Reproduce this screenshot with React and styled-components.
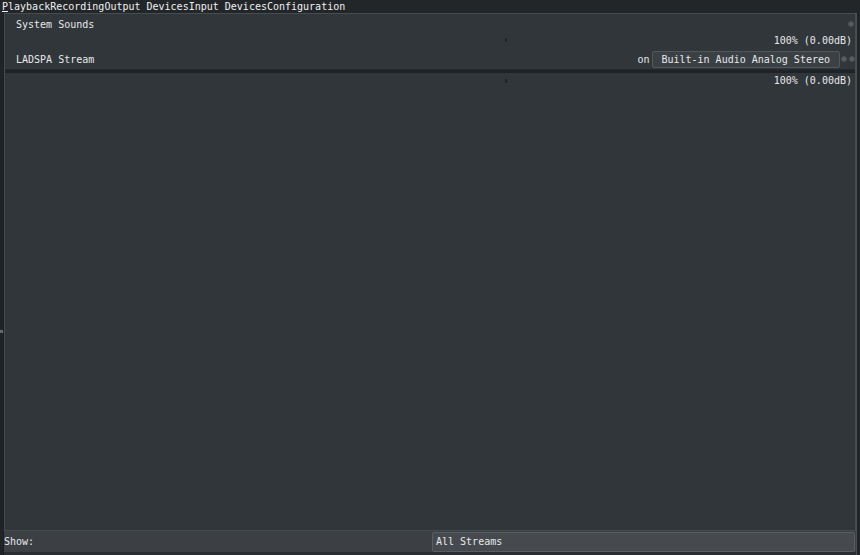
import React from "react";
import styled, { createGlobalStyle } from "styled-components";

const Global = createGlobalStyle`
  html, body { margin: 0; padding: 0; background: #232629; }
  body { font-family: "DejaVu Sans Mono", "Liberation Mono", monospace; font-size: 10px; color: #e6e8ea; }
  * { box-sizing: border-box; }
`;

const Window = styled.div`
  width: 860px;
  height: 555px;
  display: flex;
  flex-direction: column;
  background: #232629;
  overflow: hidden;
`;

const TabBar = styled.div`
  height: 13px;
  display: flex;
  align-items: center;
  padding-left: 2px;
  line-height: 13px;
  white-space: nowrap;
`;

const Tab = styled.span`
  color: #eef0f1;
  u { text-decoration: underline; text-underline-offset: 1px; }
`;

const Middle = styled.div`
  flex: 1;
  display: flex;
  min-height: 0;
`;

const Strip = styled.div`
  width: ${(p) => p.$w}px;
  background: #212427;
  border-${(p) => p.$side}: 1px solid ${(p) => p.$line};
  padding-top: ${(p) => p.$pt || 0}px;
  font-size: 5px;
  line-height: 8px;
  color: #e6e8ea;
`;

const Column = styled.div`
  flex: 1;
  display: flex;
  flex-direction: column;
  min-width: 0;
`;

const Panel = styled.div`
  flex: 1;
  background: #31363b;
  border: 1px solid #474c51;
  border-bottom: none;
  padding-top: 2px;
  display: flex;
  flex-direction: column;
`;

const Line = styled.div`
  height: ${(p) => p.$h}px;
  display: flex;
  align-items: center;
  padding: 0 0 0 11px;
  margin-top: ${(p) => p.$mt || 0}px;
  white-space: nowrap;
`;

const Name = styled.span`
  flex: 1;
`;

const Track = styled.div`
  flex: 1;
  position: relative;
  height: 100%;
`;

const Handle = styled.span`
  position: absolute;
  left: 489px;
  top: 50%;
  width: 2px;
  height: 4px;
  margin-top: -2px;
  background: #1f2225;
  border-radius: 1px;
`;

const Value = styled.span`
  padding-right: 3px;
`;

const Dot = styled.span`
  width: 6px;
  height: 6px;
  border-radius: 50%;
  background: #595e63;
  border: 1px solid #4b5055;
  margin-left: ${(p) => p.$ml ?? 2}px;
  margin-right: ${(p) => p.$mr ?? 0}px;
  flex-shrink: 0;
`;

const OnLabel = styled.span`
  margin-right: 3px;
`;

const DeviceButton = styled.div`
  height: 17px;
  display: flex;
  align-items: center;
  padding: 0 9px 0 8px;
  background: #3b4045;
  border: 1px solid #52575c;
  border-radius: 2px;
`;

const Separator = styled.div`
  height: 4px;
  margin-top: 1px;
  background: #1f2226;
  border-top: 1px solid #262a2e;
`;

const BottomBar = styled.div`
  height: 25px;
  display: grid;
  grid-template-columns: 1fr 1fr;
  align-items: center;
  background: #3c4045;
  border-top: 1px solid #464a4f;
  border-bottom: 3px solid #2a2d31;
`;

const ShowLabel = styled.span`
  padding-left: 0;
`;

const Combo = styled.div`
  height: 20px;
  display: flex;
  align-items: center;
  padding-left: 3px;
  margin: 0 1px 0 2px;
  background: #464a4f;
  border: 1px solid #5a5e63;
  border-radius: 2px;
`;

export default function App() {
  return (
    <>
      <Global />
      <Window>
        <TabBar>
          <Tab><u>P</u>layback</Tab>
          <Tab>Recording</Tab>
          <Tab>Output Devices</Tab>
          <Tab>Input Devices</Tab>
          <Tab>Configuration</Tab>
        </TabBar>
        <Middle>
          <Strip $w={4} $side="right" $line="#1c1e21" $pt={314}>n</Strip>
          <Column>
            <Panel>
              <Line $h={16}>
                <Name>System Sounds</Name>
                <Dot $mr={1} />
              </Line>
              <Line $h={16}>
                <Track><Handle /></Track>
                <Value>100% (0.00dB)</Value>
              </Line>
              <Line $h={18} $mt={2}>
                <Name>LADSPA Stream</Name>
                <OnLabel>on</OnLabel>
                <DeviceButton>Built-in Audio Analog Stereo</DeviceButton>
                <Dot $ml={1} />
                <Dot $ml={2} />
              </Line>
              <Separator />
              <Line $h={15}>
                <Track><Handle /></Track>
                <Value>100% (0.00dB)</Value>
              </Line>
            </Panel>
            <BottomBar>
              <ShowLabel>Show:</ShowLabel>
              <Combo>All Streams</Combo>
            </BottomBar>
          </Column>
          <Strip $w={4} $side="left" $line="#4a4f54" />
        </Middle>
      </Window>
    </>
  );
}
